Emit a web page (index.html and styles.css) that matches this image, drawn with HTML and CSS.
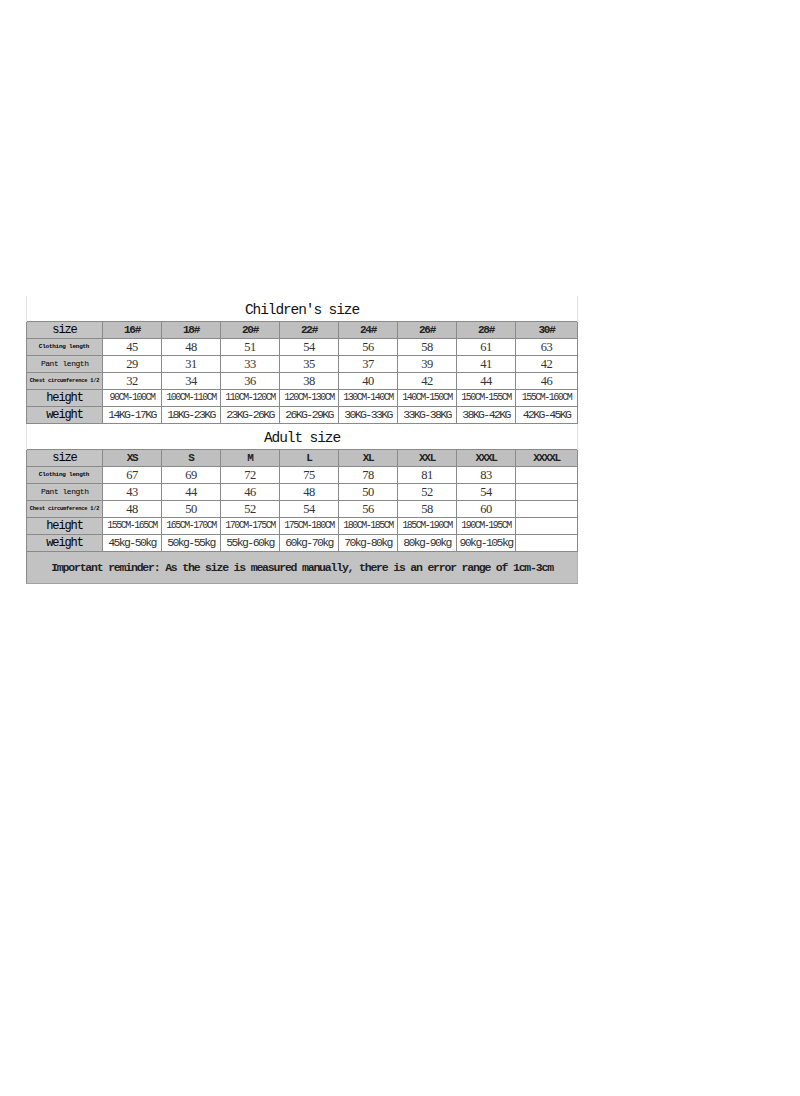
FILE: index.html
```html
<!DOCTYPE html>
<html>
<head>
<meta charset="utf-8">
<link rel="stylesheet" href="styles.css">
</head>
<body>
<div class="sheet">
<table class="chart">
<colgroup>
<col class="c-label"><col class="c-val"><col class="c-val"><col class="c-val"><col class="c-val"><col class="c-val"><col class="c-val"><col class="c-val"><col class="c-last">
</colgroup>
<tbody>
<tr class="title-row"><td colspan="9" class="title">Children's size</td></tr>
<tr class="head">
<td class="lbl big">size</td><td>16#</td><td>18#</td><td>20#</td><td>22#</td><td>24#</td><td>26#</td><td>28#</td><td>30#</td>
</tr>
<tr class="num">
<td class="lbl"><span class="shrink tiny">Clothing length</span></td><td>45</td><td>48</td><td>51</td><td>54</td><td>56</td><td>58</td><td>61</td><td>63</td>
</tr>
<tr class="num">
<td class="lbl"><span class="shrink small">Pant length</span></td><td>29</td><td>31</td><td>33</td><td>35</td><td>37</td><td>39</td><td>41</td><td>42</td>
</tr>
<tr class="num">
<td class="lbl"><span class="shrink micro">Chest circumference 1/2</span></td><td>32</td><td>34</td><td>36</td><td>38</td><td>40</td><td>42</td><td>44</td><td>46</td>
</tr>
<tr class="range">
<td class="lbl big">height</td><td>90CM-100CM</td><td>100CM-110CM</td><td>110CM-120CM</td><td>120CM-130CM</td><td>130CM-140CM</td><td>140CM-150CM</td><td>150CM-155CM</td><td>155CM-160CM</td>
</tr>
<tr class="wt">
<td class="lbl big">weight</td><td>14KG-17KG</td><td>18KG-23KG</td><td>23KG-26KG</td><td>26KG-29KG</td><td>30KG-33KG</td><td>33KG-38KG</td><td>38KG-42KG</td><td>42KG-45KG</td>
</tr>
<tr class="title-row adult"><td colspan="9" class="title">Adult size</td></tr>
<tr class="head">
<td class="lbl big">size</td><td>XS</td><td>S</td><td>M</td><td>L</td><td>XL</td><td>XXL</td><td>XXXL</td><td>XXXXL</td>
</tr>
<tr class="num">
<td class="lbl"><span class="shrink tiny">Clothing length</span></td><td>67</td><td>69</td><td>72</td><td>75</td><td>78</td><td>81</td><td>83</td><td></td>
</tr>
<tr class="num">
<td class="lbl"><span class="shrink small">Pant length</span></td><td>43</td><td>44</td><td>46</td><td>48</td><td>50</td><td>52</td><td>54</td><td></td>
</tr>
<tr class="num">
<td class="lbl"><span class="shrink micro">Chest circumference 1/2</span></td><td>48</td><td>50</td><td>52</td><td>54</td><td>56</td><td>58</td><td>60</td><td></td>
</tr>
<tr class="range">
<td class="lbl big">height</td><td>155CM-165CM</td><td>165CM-170CM</td><td>170CM-175CM</td><td>175CM-180CM</td><td>180CM-185CM</td><td>185CM-190CM</td><td>190CM-195CM</td><td></td>
</tr>
<tr class="wt">
<td class="lbl big">weight</td><td>45kg-50kg</td><td>50kg-55kg</td><td>55kg-60kg</td><td>60kg-70kg</td><td>70kg-80kg</td><td>80kg-90kg</td><td>90kg-105kg</td><td></td>
</tr>
<tr class="note-row">
<td colspan="9" class="note">Important reminder: As the size is measured manually, there is an error range of 1cm-3cm</td>
</tr>
</tbody>
</table>
</div>
</body>
</html>
```

FILE: styles.css
```css
html, body {
  margin: 0;
  padding: 0;
  background: #ffffff;
}

.sheet {
  padding: 296px 0 0 26px;
}

.chart {
  border-collapse: collapse;
  table-layout: fixed;
  width: 552px;
  font-family: "Liberation Mono", "DejaVu Sans Mono", monospace;
  color: #333;
}

.c-label { width: 76px; }
.c-val { width: 59px; }
.c-last { width: 62px; }

.chart td {
  border: 1px solid #8a8a8a;
  padding: 0;
  height: 16px;
  text-align: center;
  vertical-align: middle;
  white-space: nowrap;
  line-height: 16px;
  background: #fff;
}

.chart .title-row td.title {
  height: 23px;
  border-top: none;
  border-bottom: none;
  border-left: 1px solid #e2e2e2;
  border-right: 1px solid #e2e2e2;
  font-size: 14.5px;
  letter-spacing: -1.1px;
  color: #111;
  line-height: 22px;
  padding-top: 2px;
}

.chart .head td {
  background: #bfbfbf;
  font-weight: bold;
  font-size: 11px;
  letter-spacing: -1.3px;
  color: #222;
}

.chart td.lbl {
  background: #c4c4c4;
  color: #000;
  overflow: hidden;
  font-family: "Liberation Mono", "DejaVu Sans Mono", monospace;
}

.chart td.big {
  font-size: 12px;
  letter-spacing: -1.1px;
  font-weight: normal;
}

.shrink {
  display: inline-block;
  font-family: "Liberation Mono", "DejaVu Sans Mono", monospace;
  font-size: 10px;
  line-height: 10px;
  vertical-align: middle;
  font-weight: bold;
  margin: 0 -30px;
  transform-origin: 50% 50%;
}

.shrink.tiny {
  letter-spacing: -0.4px;
  transform: scale(0.6);
}

.shrink.small {
  letter-spacing: -0.6px;
  font-weight: normal;
  transform: scale(0.8);
}

.shrink.micro {
  letter-spacing: -0.3px;
  transform: scale(0.53);
}

.chart .num td {
  font-family: "Liberation Serif", "Times New Roman", serif;
  font-size: 12.5px;
  letter-spacing: -0.6px;
}

.chart .num td.lbl {
  font-family: "Liberation Mono", "DejaVu Sans Mono", monospace;
  letter-spacing: 0;
}

.chart .range td {
  font-size: 10px;
  letter-spacing: -1.5px;
}

.chart .wt td {
  font-size: 11.5px;
  letter-spacing: -1.6px;
}

.chart .range td.big,
.chart .wt td.big {
  font-size: 12px;
  letter-spacing: -1.1px;
}

.chart .note-row td.note {
  height: 31px;
  background: #c2c2c2;
  font-size: 11.5px;
  font-weight: bold;
  letter-spacing: -1.2px;
  color: #222;
  border-bottom-color: #a0a0a0;
  border-right-color: #b0b0b0;
}
```
